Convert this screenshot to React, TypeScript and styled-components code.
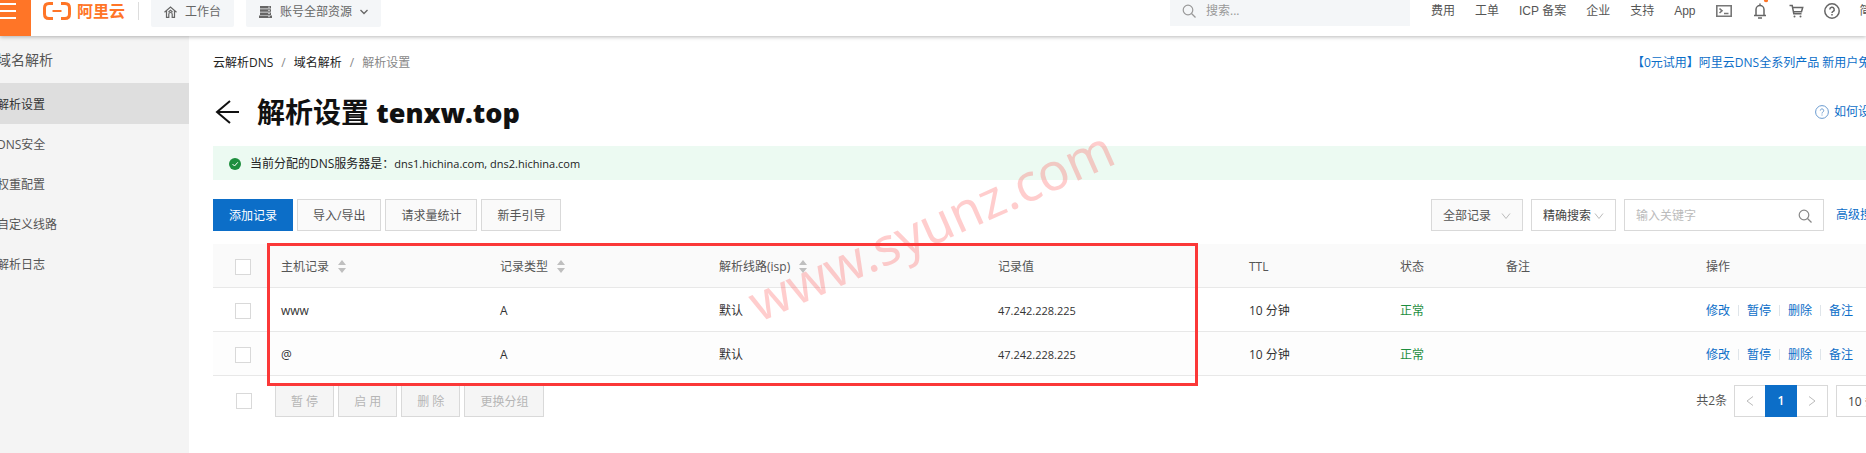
import React from "react";
import styled, { createGlobalStyle } from "styled-components";

const GlobalStyle = createGlobalStyle`
  * { box-sizing: border-box; }
  body {
    margin: 0;
    background: #fff;
    color: #333;
    overflow: hidden;
    font-family: "Open Sans", "Noto Sans CJK SC", sans-serif;
    font-size: 12px;
    line-height: 18px;
  }
  button, input, select { font: inherit; color: inherit; margin: 0; }
  a { color: inherit; text-decoration: none; }
  svg { display: block; flex: none; }
`;

const Page = styled.div`
  display: flex;
  flex-direction: column;
  height: 100vh;
  overflow: hidden;
`;

const Header = styled.header`
  display: flex;
  align-items: flex-start;
  height: 36px;
  flex: none;
  background: #fff;
  box-shadow: 0 1px 4px rgba(0, 0, 0, 0.28);
  z-index: 1;
  overflow-x: clip;
`;

const MenuButton = styled.button`
  width: 31px;
  height: 36px;
  flex: none;
  padding: 0;
  border: 0;
  background: #ff7527;
`;

const Logo = styled.a`
  display: flex;
  align-items: center;
  gap: 6px;
  height: 22px;
  margin-left: 12px;
  color: #ff7527;
  font-size: 16px;
  font-weight: 700;
  white-space: nowrap;
`;

const Divider = styled.span`
  width: 1px;
  height: 18px;
  margin: 2px 12px 0 13px;
  background: #ddd;
`;

const HeaderChip = styled.button`
  display: flex;
  align-items: center;
  gap: 8px;
  height: 27px;
  margin-right: 12px;
  padding: 0 13px 3px;
  border: 0;
  border-radius: 0 0 2px 2px;
  background: #f4f6f8;
  color: #666;
  white-space: nowrap;
`;

const HeaderSearch = styled.label`
  display: flex;
  align-items: center;
  gap: 10px;
  width: 240px;
  height: 26px;
  margin-left: auto;
  padding: 0 12px 4px;
  background: #f4f6f8;
  color: #999;
  input {
    flex: 1;
    min-width: 0;
    padding: 0;
    border: 0;
    outline: 0;
    background: none;
  }
  input::placeholder { color: #999; opacity: 1; }
`;

const HeaderNav = styled.nav`
  display: flex;
  align-items: center;
  gap: 20px;
  width: 456px;
  height: 22px;
  padding-left: 21px;
  overflow-x: clip;
  color: #555;
  white-space: nowrap;
  a { flex: none; }
`;

const Latin = styled.span`
  font-family: "Liberation Sans", "Noto Sans CJK SC", sans-serif;
`;

const Body = styled.div`
  display: flex;
  flex: 1;
  min-height: 0;
`;

const Sidebar = styled.nav`
  display: flex;
  flex-direction: column;
  width: 189px;
  flex: none;
  background: #f4f4f4;
  overflow: hidden;
`;

const SideTitle = styled.div`
  height: 47px;
  margin-left: -3px;
  color: #555;
  font-size: 14px;
  line-height: 48px;
`;

const SideLink = styled.a<{ $active?: boolean }>`
  height: ${(p) => (p.$active ? 41 : 40)}px;
  line-height: ${(p) => (p.$active ? 43 : 42)}px;
  margin-left: -3px;
  background: ${(p) => (p.$active ? "#dedede" : "transparent")};
  color: ${(p) => (p.$active ? "#333" : "#555")};
`;

const Main = styled.main`
  flex: 1;
  min-width: 0;
  padding-left: 24px;
`;

const Row = styled.div`
  display: flex;
  align-items: center;
  justify-content: space-between;
`;

const CrumbRow = styled(Row)`
  height: 54px;
`;

const Crumbs = styled.nav`
  display: flex;
  gap: 8px;
  color: #222;
  span { color: #888; }
`;

const EdgeLink = styled.a<{ $width: number }>`
  display: flex;
  align-items: center;
  gap: 5px;
  width: ${(p) => p.$width}px;
  flex: none;
  overflow: hidden;
  color: #0c6ec8;
  white-space: nowrap;
`;

const TitleRow = styled(Row)`
  height: 44px;
`;

const Heading = styled.div`
  display: flex;
  align-items: center;
  gap: 16px;
  color: #111;
  h1 {
    margin: 0;
    font-size: 28px;
    line-height: 40px;
    font-weight: 700;
  }
`;

const BackButton = styled.button`
  padding: 0 0 0 2px;
  border: 0;
  background: none;
`;

const HeadingDomain = styled.span`
  font-size: 27px;
  font-weight: 800;
`;

const Notice = styled.div`
  display: flex;
  align-items: center;
  gap: 9px;
  height: 34px;
  margin-top: 12px;
  padding: 1px 0 0 16px;
  background: #ecfaf2;
  color: #222;
`;

const Toolbar = styled(Row)`
  margin-top: 19px;
  margin-bottom: 13px;
`;

const Group = styled.div<{ $gap: number }>`
  display: flex;
  align-items: center;
  gap: ${(p) => p.$gap}px;
`;

const Button = styled.button<{ $primary?: boolean }>`
  display: flex;
  align-items: center;
  gap: 10px;
  height: 32px;
  padding: 2px 15px 0;
  border: 1px solid ${(p) => (p.$primary ? "#0c6ec8" : "#d9d9d9")};
  background: ${(p) => (p.$primary ? "#0c6ec8" : "#fafafa")};
  color: ${(p) => (p.$primary ? "#fff" : "#555")};
  white-space: nowrap;
  &:disabled { background: #f5f5f5; color: #b5b5b5; }
`;

const FilterButton = styled(Button)`
  width: 92px;
  padding: 2px 11px 0;
`;

const SelectBox = styled.div<{ $width: number }>`
  display: flex;
  align-items: center;
  width: ${(p) => p.$width}px;
  height: 32px;
  border: 1px solid #d9d9d9;
  padding: 1px 12px 0 11px;
  color: #444;
  overflow: hidden;
  select {
    flex: none;
    padding: 0;
    border: 0;
    outline: 0;
    background: none;
    appearance: none;
  }
  svg { margin-left: 2px; }
`;

const Keyword = styled.label`
  display: flex;
  align-items: center;
  width: 200px;
  height: 32px;
  margin-right: 4px;
  padding: 1px 11px 0;
  border: 1px solid #d9d9d9;
  color: #888;
  input {
    flex: 1;
    min-width: 0;
    padding: 0;
    border: 0;
    outline: 0;
  }
  input::placeholder { color: #bbb; opacity: 1; }
`;

const TableArea = styled.div`
  position: relative;
`;

const Table = styled.table`
  width: 100%;
  table-layout: fixed;
  border-collapse: separate;
  border-spacing: 0;
  th, td {
    height: 44px;
    padding: 2px 0 0 12px;
    border-bottom: 1px solid #e8e8e8;
    text-align: left;
    font-weight: 400;
    white-space: nowrap;
  }
  th { background: #fafafa; color: #555; }
  tr:nth-child(2) td { background: #fdfdfd; }
  th:first-child, td:first-child { padding-left: 22px; }
`;

const SortLabel = styled.span`
  display: flex;
  align-items: center;
  gap: 9px;
`;

const Check = styled.input.attrs({ type: "checkbox" })`
  display: block;
  width: 16px;
  height: 16px;
  flex: none;
  appearance: none;
  border: 1px solid #d9d9d9;
  background: #fff;
`;

const Value = styled.span`
  font-size: 11px;
`;

const Status = styled.span`
  color: #1e8e3e;
`;

const Actions = styled.div`
  display: flex;
  align-items: center;
  color: #0c6ec8;
  a + a {
    display: flex;
    align-items: center;
  }
  a + a::before {
    content: "";
    width: 1px;
    height: 11px;
    margin: 0 8px;
    background: #dfe5ea;
  }
`;

const Highlight = styled.div`
  position: absolute;
  left: 54px;
  top: -1px;
  width: 931px;
  height: 143px;
  border: 3px solid #fb3838;
  pointer-events: none;
`;

const Watermark = styled.div`
  position: absolute;
  left: 550px;
  top: 28px;
  color: rgba(255, 60, 60, 0.26);
  font-family: "Noto Sans", sans-serif;
  font-size: 52px;
  line-height: 60px;
  white-space: nowrap;
  transform: rotate(-24deg);
  transform-origin: 0 100%;
  pointer-events: none;
`;

const Footer = styled(Row)`
  padding: 9px 0 0 23px;
`;

const Bulk = styled(Group)`
  margin-left: 19px;
`;

const Pager = styled.div`
  display: flex;
  align-items: center;
  color: #555;
  white-space: nowrap;
`;

const PageButton = styled.button<{ $current?: boolean }>`
  display: flex;
  align-items: center;
  justify-content: center;
  width: 32px;
  height: 32px;
  padding: 0;
  border: 1px solid ${(p) => (p.$current ? "#0c6ec8" : "#d9d9d9")};
  border-right-width: ${(p) => (p.$current ? 1 : 0)}px;
  background: ${(p) => (p.$current ? "#0c6ec8" : "#fff")};
  color: ${(p) => (p.$current ? "#fff" : "#bbb")};
  font-weight: ${(p) => (p.$current ? 600 : 400)};
  &:first-child { width: 31px; }
  &:last-child { width: 31px; border-width: 1px 1px 1px 0; }
`;

const PageSteps = styled.div`
  display: flex;
  margin: 0 8px 0 7px;
`;

const PageSize = styled(SelectBox)`
  border-right: 0;
  padding-right: 0;
`;

const Chevron = ({ size = 10, color = "#bbb" }: { size?: number; color?: string }) => (
  <svg width={size} height={size} viewBox="0 0 10 10" fill="none" stroke={color} aria-hidden="true">
    <path d="M1 2.5 5 7.5 9 2.5" />
  </svg>
);

const Magnifier = ({ size, width }: { size: number; width: number }) => (
  <svg width={size} height={size} viewBox="0 0 14 14" fill="none" stroke="currentColor" strokeWidth={width} aria-hidden="true">
    <circle cx="6" cy="6" r="4.8" />
    <path d="m9.5 9.5 4 4" />
  </svg>
);

const Sorter = () => (
  <svg width="8" height="13" viewBox="0 0 8 13" fill="#bfbfbf" aria-hidden="true">
    <path d="M4 0 8 5H0zM4 13 0 8h8z" />
  </svg>
);

const columns: { title: string; width: number; sort?: boolean }[] = [
  { title: "主机记录", width: 219, sort: true },
  { title: "记录类型", width: 219, sort: true },
  { title: "解析线路(isp)", width: 279, sort: true },
  { title: "记录值", width: 251 },
  { title: "TTL", width: 151 },
  { title: "状态", width: 106 },
  { title: "备注", width: 200 },
  { title: "操作", width: 172 },
];

const records = ["www", "@"];
const sideItems = ["解析设置", "DNS安全", "权重配置", "自定义线路", "解析日志"];

export default function App() {
  return (
    <Page>
      <GlobalStyle />
      <Header>
        <MenuButton aria-label="菜单">
          <svg width="31" height="36" viewBox="0 0 31 36" stroke="#fff" strokeWidth="2" aria-hidden="true">
            <path d="M0 4h16M0 11h16M0 18h16" />
          </svg>
        </MenuButton>
        <Logo href="#">
          <svg width="28" height="18" viewBox="0 0 28 18" fill="none" stroke="#ff7527" aria-hidden="true">
            <path d="M10 1.5H6Q1.5 1.5 1.5 6v6Q1.5 16.5 6 16.5h4M18 1.5h4q4.5 0 4.5 4.5v6q0 4.5-4.5 4.5h-4" strokeWidth="3" />
            <path d="M9.5 9h9" strokeWidth="2" />
          </svg>
          阿里云
        </Logo>
        <Divider />
        <HeaderChip>
          <svg width="13" height="12" viewBox="0 0 13 12" fill="none" stroke="#666" strokeWidth="1.2" aria-hidden="true">
            <path d="M.5 6.2 6.5 1l6 5.2M2.5 5v6.4h2.3V8.2a1.7 1.7 0 0 1 3.4 0v3.2h2.3V5M4.5 6l2-1.7L8.5 6" />
          </svg>
          工作台
        </HeaderChip>
        <HeaderChip>
          <svg width="13" height="12" viewBox="0 0 13 12" fill="#666" aria-hidden="true">
            <path d="M1 0h11v2.5H1zM1 3.2h11v2.5H1zM1 6.4h11v2.5H1zM0 9.5h13V12H0z" />
            <path d="M9 1.2h2M9 4.4h2M9 7.6h2M9 10.7h2" stroke="#f4f6f8" strokeWidth=".7" />
          </svg>
          账号全部资源
          <svg width="8" height="6" viewBox="0 0 8 6" fill="none" stroke="#666" strokeWidth="1.3" aria-hidden="true">
            <path d="m.5 1 3.5 3.5L7.5 1" />
          </svg>
        </HeaderChip>
        <HeaderSearch>
          <Magnifier size={14} width={1.2} />
          <input placeholder="搜索..." aria-label="搜索" />
        </HeaderSearch>
        <HeaderNav>
          <a href="#">费用</a>
          <a href="#">工单</a>
          <a href="#"><Latin>ICP 备案</Latin></a>
          <a href="#">企业</a>
          <a href="#">支持</a>
          <a href="#"><Latin>App</Latin></a>
          <a href="#" aria-label="终端">
            <svg width="16" height="16" viewBox="0 0 16 16" fill="none" stroke="#777" strokeWidth="1.6">
              <path d="M.8 2.8h14.4v10.4H.8zM3.5 5.5 6 7.8 3.5 10M8 10.5h4.5" />
            </svg>
          </a>
          <a href="#" aria-label="通知">
            <svg width="16" height="22" viewBox="0 0 16 22" fill="none" stroke="#666" strokeWidth="1.5">
              <path d="M2 15.5h12M4 15V9.5a4 4 0 0 1 8 0V15M8 3.5v2M6 18h4" />
              <circle cx="14" cy="0" r="2.2" fill="#ff7527" stroke="none" />
            </svg>
          </a>
          <a href="#" aria-label="购物车">
            <svg width="16" height="16" viewBox="0 0 16 16" fill="none" stroke="#666" strokeWidth="1.5">
              <path d="M1.5 2.5h2.7l1.6 8.3h7.7M4.7 4.5h10l-1.2 4.3H5.5" />
              <circle cx="6.5" cy="13.5" r="1" fill="#666" stroke="none" />
              <circle cx="12.5" cy="13.5" r="1" fill="#666" stroke="none" />
            </svg>
          </a>
          <a href="#" aria-label="帮助">
            <svg width="16" height="16" viewBox="0 0 16 16" fill="none" stroke="#666" strokeWidth="1.5">
              <circle cx="8" cy="8" r="7.2" />
              <path d="M5.8 6.5a2.2 2.2 0 1 1 3.3 1.9Q8 9 8 10M8 11v1.5" />
            </svg>
          </a>
          <a href="#">简体</a>
        </HeaderNav>
      </Header>
      <Body>
        <Sidebar>
          <SideTitle>域名解析</SideTitle>
          {sideItems.map((item, i) => (
            <SideLink key={item} href="#" $active={i === 0}>{item}</SideLink>
          ))}
        </Sidebar>
        <Main>
          <CrumbRow>
            <Crumbs aria-label="面包屑">
              <a href="#">云解析DNS</a>
              <span>/</span>
              <a href="#">域名解析</a>
              <span>/</span>
              <span>解析设置</span>
            </Crumbs>
            <EdgeLink href="#" $width={234}>【0元试用】阿里云DNS全系列产品 新用户免费</EdgeLink>
          </CrumbRow>
          <TitleRow>
            <Heading>
              <BackButton aria-label="返回">
                <svg width="26" height="24" viewBox="0 0 26 24" fill="none" stroke="#111" strokeWidth="2">
                  <path d="M15 1 2 12l13 11M2 12h22" />
                </svg>
              </BackButton>
              <h1>解析设置 <HeadingDomain>tenxw.top</HeadingDomain></h1>
            </Heading>
            <EdgeLink href="#" $width={51}>
              <svg width="14" height="14" viewBox="0 0 14 14" fill="none" stroke="#6a9bd0" aria-hidden="true">
                <circle cx="7" cy="7" r="6.4" />
                <path d="M5.3 5.5a1.7 1.7 0 1 1 2.5 1.6Q7 7.5 7 8.5M7 9.5v1" />
              </svg>
              如何设置
            </EdgeLink>
          </TitleRow>
          <Notice>
            <svg width="12" height="12" viewBox="0 0 12 12" fill="none" aria-hidden="true">
              <circle cx="6" cy="6" r="6" fill="#1e8e3e" />
              <path d="m3.5 6 2 2 3.3-3.7" stroke="#fff" />
            </svg>
            <span>当前分配的DNS服务器是：<Value>dns1.hichina.com, dns2.hichina.com</Value></span>
          </Notice>
          <Toolbar>
            <Group $gap={4}>
              <Button $primary>添加记录</Button>
              <Button>导入/导出</Button>
              <Button>请求量统计</Button>
              <Button>新手引导</Button>
            </Group>
            <Group $gap={8}>
              <FilterButton>全部记录<Chevron /></FilterButton>
              <SelectBox $width={85}>
                <select aria-label="搜索方式"><option>精确搜索</option></select>
                <Chevron />
              </SelectBox>
              <Keyword>
                <input placeholder="输入关键字" aria-label="关键字" />
                <Magnifier size={14} width={1.2} />
              </Keyword>
              <EdgeLink href="#" $width={30}>高级搜索</EdgeLink>
            </Group>
          </Toolbar>
          <TableArea>
            <Table>
              <colgroup>
                <col style={{ width: 56 }} />
                {columns.map((c) => <col key={c.title} style={{ width: c.width }} />)}
              </colgroup>
              <thead>
                <tr>
                  <th><Check aria-label="全选" /></th>
                  {columns.map((c) => (
                    <th key={c.title}>
                      {c.sort ? <SortLabel>{c.title}<Sorter /></SortLabel> : c.title}
                    </th>
                  ))}
                </tr>
              </thead>
              <tbody>
                {records.map((host) => (
                  <tr key={host}>
                    <td><Check aria-label={host} /></td>
                    <td>{host}</td>
                    <td>A</td>
                    <td>默认</td>
                    <td><Value>47.242.228.225</Value></td>
                    <td>10 分钟</td>
                    <td><Status>正常</Status></td>
                    <td />
                    <td>
                      <Actions>
                        <a href="#">修改</a>
                        <a href="#">暂停</a>
                        <a href="#">删除</a>
                        <a href="#">备注</a>
                      </Actions>
                    </td>
                  </tr>
                ))}
              </tbody>
            </Table>
            <Highlight />
            <Watermark>www.syunz.com</Watermark>
          </TableArea>
          <Footer>
            <Group $gap={4}>
              <Check aria-label="选择全部记录" />
              <Bulk $gap={4}>
                <Button disabled>暂 停</Button>
                <Button disabled>启 用</Button>
                <Button disabled>删 除</Button>
                <Button disabled>更换分组</Button>
              </Bulk>
            </Group>
            <Pager>
              共2条
              <PageSteps>
                <PageButton aria-label="上一页">
                  <svg width="8" height="12" viewBox="0 0 8 12" fill="none" stroke="#bbb"><path d="M7 1.5 1 6l6 4.5" /></svg>
                </PageButton>
                <PageButton $current>1</PageButton>
                <PageButton aria-label="下一页">
                  <svg width="8" height="12" viewBox="0 0 8 12" fill="none" stroke="#bbb"><path d="m1 1.5 6 4.5-6 4.5" /></svg>
                </PageButton>
              </PageSteps>
              <PageSize $width={30}>
                <select aria-label="每页条数"><option>10 条/页</option></select>
              </PageSize>
            </Pager>
          </Footer>
        </Main>
      </Body>
    </Page>
  );
}
